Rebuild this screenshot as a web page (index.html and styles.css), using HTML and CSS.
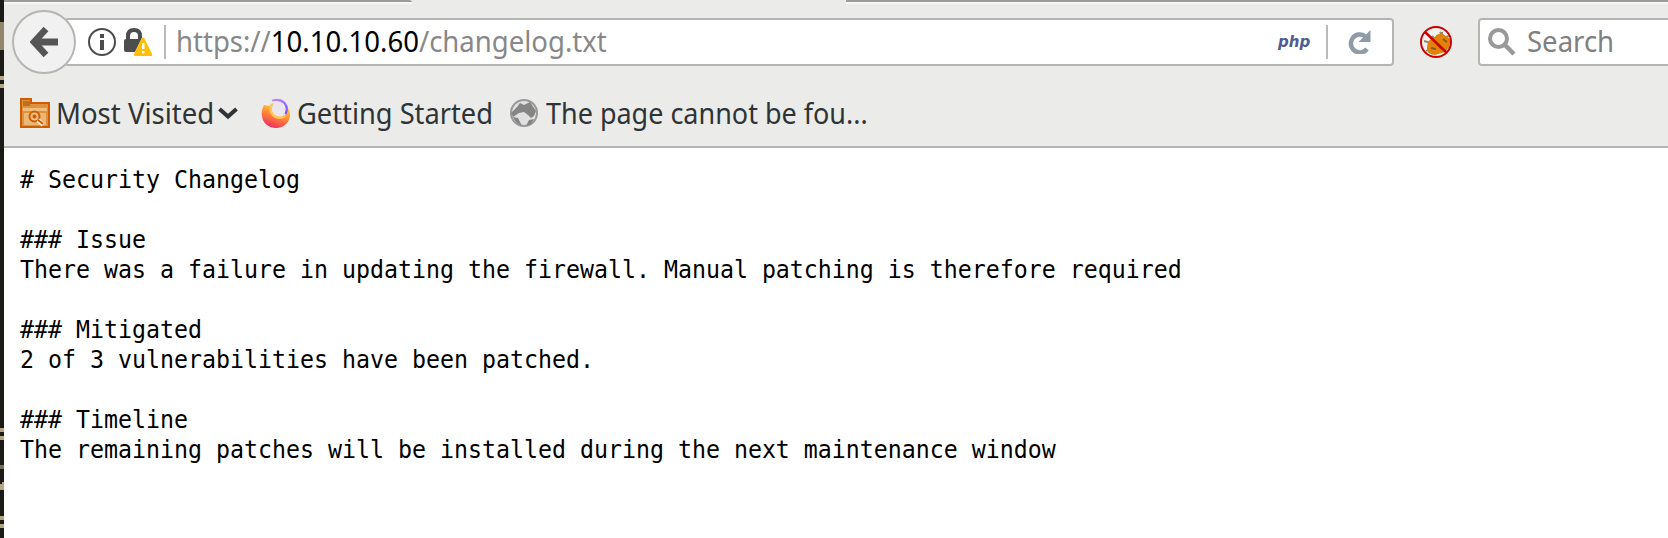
FILE: index.html
```
<!DOCTYPE html>
<html lang="en">
<head>
<meta charset="utf-8">
<title>changelog.txt</title>
<link rel="stylesheet" href="styles.css">
</head>
<body>
<div class="desktop">
  <svg class="edge" viewBox="0 0 4 538">
    <rect width="4" height="538" fill="#1b1a17"/>
    <rect y="22" width="4" height="28" fill="#92876d"/>
    <path d="M0 78h4M0 86h4M0 430h4M0 438h4M0 518h4M0 526h4" stroke="#b5a782" stroke-width="4"/>
    <path d="M0 467h4" stroke="#777060" stroke-width="4"/>
    <path d="M0 484h2v-2h2v8H0z" fill="#b5a782"/>
  </svg>
  <main class="window">
    <div class="tab-line"><i class="tab-left"></i><i class="tab-right"></i></div>
    <header class="toolbar">
      <div class="back"><svg width="28" height="32" viewBox="0 0 28 32"><path d="M16 3L4 16l12 13" fill="none" stroke="#555" stroke-width="6.500"/><path d="M4 16h24" stroke="#555" stroke-width="7"/></svg></div>
      <div class="url-bar">
        <svg class="info" width="28" height="28" viewBox="0 0 28 28"><circle cx="14" cy="14" r="13" fill="none" stroke="#4d4d4d" stroke-width="2"/><path d="M12 6h4v4h-4zM12 12h4v10h-4z" fill="#4d4d4d"/></svg>
        <svg class="lock" width="28" height="28" viewBox="0 0 28 28"><path d="M4 12V8q0-6 6-6t6 6v4" fill="none" stroke="#4d4d4d" stroke-width="4"/><rect y="11" width="18" height="13" rx="2" fill="#4d4d4d"/><path d="M19 8L9 28h20z" fill="#fff"/><path d="M19 9.500q1 0 1.500 1L28 26q.4 2-1 2H11q-1.400 0-1-2l7.500-15.500q.5-1 1.500-1z" fill="#ffbf00"/><path d="M18 15h2.500v6H18zM18 23h2.500v2.500H18z" fill="#fff"/></svg>
        <i class="divider"></i>
        <span class="url"><span class="fit-url">https://<b>10.10.10.60</b>/changelog.txt</span></span>
        <span class="php">php</span>
        <i class="divider"></i>
        <svg class="reload" width="24" height="24" viewBox="0 0 24 24"><path d="M19 19A9 9 0 1 1 17 6" fill="none" stroke="#8e9ba8" stroke-width="4.500"/><path d="M22.500 0v12h-12z" fill="#8e9ba8"/></svg>
      </div>
      <svg class="bug" width="32" height="32" viewBox="0 0 32 32"><circle cx="16" cy="16" r="15" fill="#f4f2ee"/><path d="M4 15l7 2M20 6l3 5M22 6v5M26 11l3-1M6 25l5-3M26 20l4 1M12 10l3 3" stroke="#8a8a80" stroke-width="2"/><path d="M7 22q0-9 8-11 2-4 8-3l7 5q1 8-5 13l-10 3q-8 0-8-7z" fill="#e28208"/><path d="M11 22l5 1M17 18l4 4M23 13l4 3" stroke="#865b1c" stroke-width="2"/><circle cx="16" cy="16" r="15" fill="none" stroke="#cd0000" stroke-width="2"/><path d="M5 6l22 21" stroke="#cd0000" stroke-width="2.500"/></svg>
      <div class="search">
        <svg width="28" height="28" viewBox="0 0 28 28"><circle cx="10.500" cy="10.500" r="8.500" fill="none" stroke="#999" stroke-width="4"/><path d="M17 17l9 9" stroke="#999" stroke-width="4.500"/></svg>
        <span class="fit-search">Search</span>
      </div>
    </header>
    <nav class="bookmarks">
      <svg class="folder" width="30" height="30" viewBox="0 0 30 30"><path d="M1 1h10v4h18v24H1z" fill="#e0913f" stroke="#ce5c00" stroke-width="2"/><path d="M3 3h7v5H3z" fill="#bd7022"/><path d="M3 10h24v3H3z" fill="#efbd7c"/><path d="M4 15h22v12H4z" fill="#e9b878"/><circle cx="14.500" cy="18.500" r="5" fill="#efc187" stroke="#ce5c00" stroke-width="2"/><circle cx="14.500" cy="18.500" r="2" fill="#ce5c00"/><path d="M18 22l5 5" stroke="#fff0d8" stroke-width="4"/><path d="M18 22l5 4" stroke="#ce5c00" stroke-width="2"/></svg>
      <span class="label most"><span>Most Visited</span></span>
      <svg class="chevron" width="20" height="14" viewBox="0 0 20 14"><path d="M1.500 3l8.500 7.500L18.500 3" fill="none" stroke="#2e3436" stroke-width="4"/></svg>
      <svg class="fox" width="30" height="30" viewBox="0 0 30 30"><defs><linearGradient id="g" x1=".7" y1="0" x2=".3" y2="1"><stop stop-color="#ffe14a"/><stop offset=".5" stop-color="#ff8a35"/><stop offset="1" stop-color="#f32763"/></linearGradient><linearGradient id="p" x1="0" y1="0" x2="1" y2="1"><stop stop-color="#c98bff"/><stop offset="1" stop-color="#7a56f0"/></linearGradient></defs><path d="M3 7Q0 12 1 18a14 13 0 0 0 28-2q0-4-2-6L12 5 8 8z" fill="url(#g)"/><circle cx="18" cy="11.500" r="8" fill="#eae6ee"/><path d="M11 2.500q8-2 12.500 2.500 4 5 1 11" fill="none" stroke="url(#p)" stroke-width="2.200"/><path d="M11 6q-3 6 1 11 5 5 12 1" fill="none" stroke="#ffc45b" stroke-width="2.500"/></svg>
      <span class="label started"><span>Getting Started</span></span>
      <svg class="globe" width="28" height="28" viewBox="0 0 28 28"><circle cx="14" cy="14" r="13" fill="#e0e0e0" stroke="#999" stroke-width="2"/><path d="M7 8l3-4 4 2 2-1 4-2 6 9-2 5-3 2-3-3-4-3-5 1-6 4-2-4 3-3z" fill="#858585"/><path d="M3 18l5 1 2 4 2 4q-7-3-9-9zM19 21l5-1-3 5-5 2z" fill="#858585"/></svg>
      <span class="label missing"><span>The page cannot be fou...</span></span>
    </nav>
    <pre class="document"># Security Changelog

### Issue
There was a failure in updating the firewall. Manual patching is therefore required

### Mitigated
2 of 3 vulnerabilities have been patched.

### Timeline
The remaining patches will be installed during the next maintenance window</pre>
  </main>
</div>
</body>
</html>
```
FILE: styles.css
```
* { box-sizing: border-box; }
body { margin: 0; overflow: hidden; background: #fff; font-family: "Noto Sans", sans-serif; }
svg { display: block; flex: none; }
.desktop { display: flex; width: 1668px; height: 538px; }
.edge { width: 4px; height: 538px; }
.window { width: 1664px; flex: none; overflow: hidden; }
.tab-line { height: 4px; display: flex; justify-content: space-between; background: #ebebea; }
.tab-left, .tab-right { height: 4px; background: #9d9d9c; border-bottom: 2px solid #f8f8f8; }
.tab-left { width: 408px; border-top-right-radius: 3px; }
.tab-right { width: 822px; }
.toolbar { height: 76px; display: flex; align-items: center; background: #ebebea; }
.back { width: 64px; height: 64px; margin-left: 8px; flex: none; border: 2px solid #b5b5b3; border-radius: 50%; background: #f1f1f1; display: flex; align-items: center; padding-left: 16px; z-index: 1; }
.url-bar { width: 1330px; height: 48px; margin-left: -12px; flex: none; border: 2px solid #b5b5b3; border-radius: 4px; background: #fff; display: flex; align-items: center; padding: 0 20px 0 22px; }
.lock { margin-left: 8px; }
.divider { width: 2px; height: 34px; background: #bababa; flex: none; margin-left: 12px; }
.url { flex: 1; margin-left: 10px; padding-bottom: 2px; color: #888; font-size: 29px; line-height: 42px; white-space: nowrap; }
.url b { color: #000; font-weight: 400; }
.fit-url, .fit-search, .label span { display: inline-block; transform-origin: left center; transform: scale(.949, 1.025); }
.php { width: 32px; flex: none; color: #4f5b93; font-family: "DejaVu Sans", sans-serif; font-size: 15px; font-weight: 700; font-style: italic; line-height: 28px; }
.php + .divider { margin-left: 16px; }
.reload { margin-left: 20px; }
.bug { margin-left: 26px; }
.search { width: 220px; height: 48px; margin-left: 26px; flex: none; border: 2px solid #b5b5b3; border-radius: 4px; background: #fff; display: flex; align-items: center; padding-left: 8px; color: #808080; font-size: 29px; line-height: 42px; }
.fit-search { margin-left: 11px; padding-bottom: 2px; }
.bookmarks { height: 68px; display: flex; align-items: center; padding: 0 0 1px 16px; border-bottom: 2px solid #b5b5b3; background: #ebebea; color: #2e3436; font-size: 29px; line-height: 40px; }
.label { flex: none; white-space: nowrap; }
.label.started span { transform: scale(.94, 1.025); }
.label.missing span { transform: scale(.93, 1.025); }
.most { width: 162px; margin-left: 6px; }
.started { width: 198px; margin-left: 6px; }
.missing { margin-left: 8px; }
.fox { margin-left: 23px; }
.globe { margin-left: 15px; }
.document { margin: 17px 0 0 16px; font-family: "DejaVu Sans Mono", monospace; font-size: 23.26px; line-height: 28.708px; color: #000; transform: scaleY(1.045); transform-origin: left top; }
```
